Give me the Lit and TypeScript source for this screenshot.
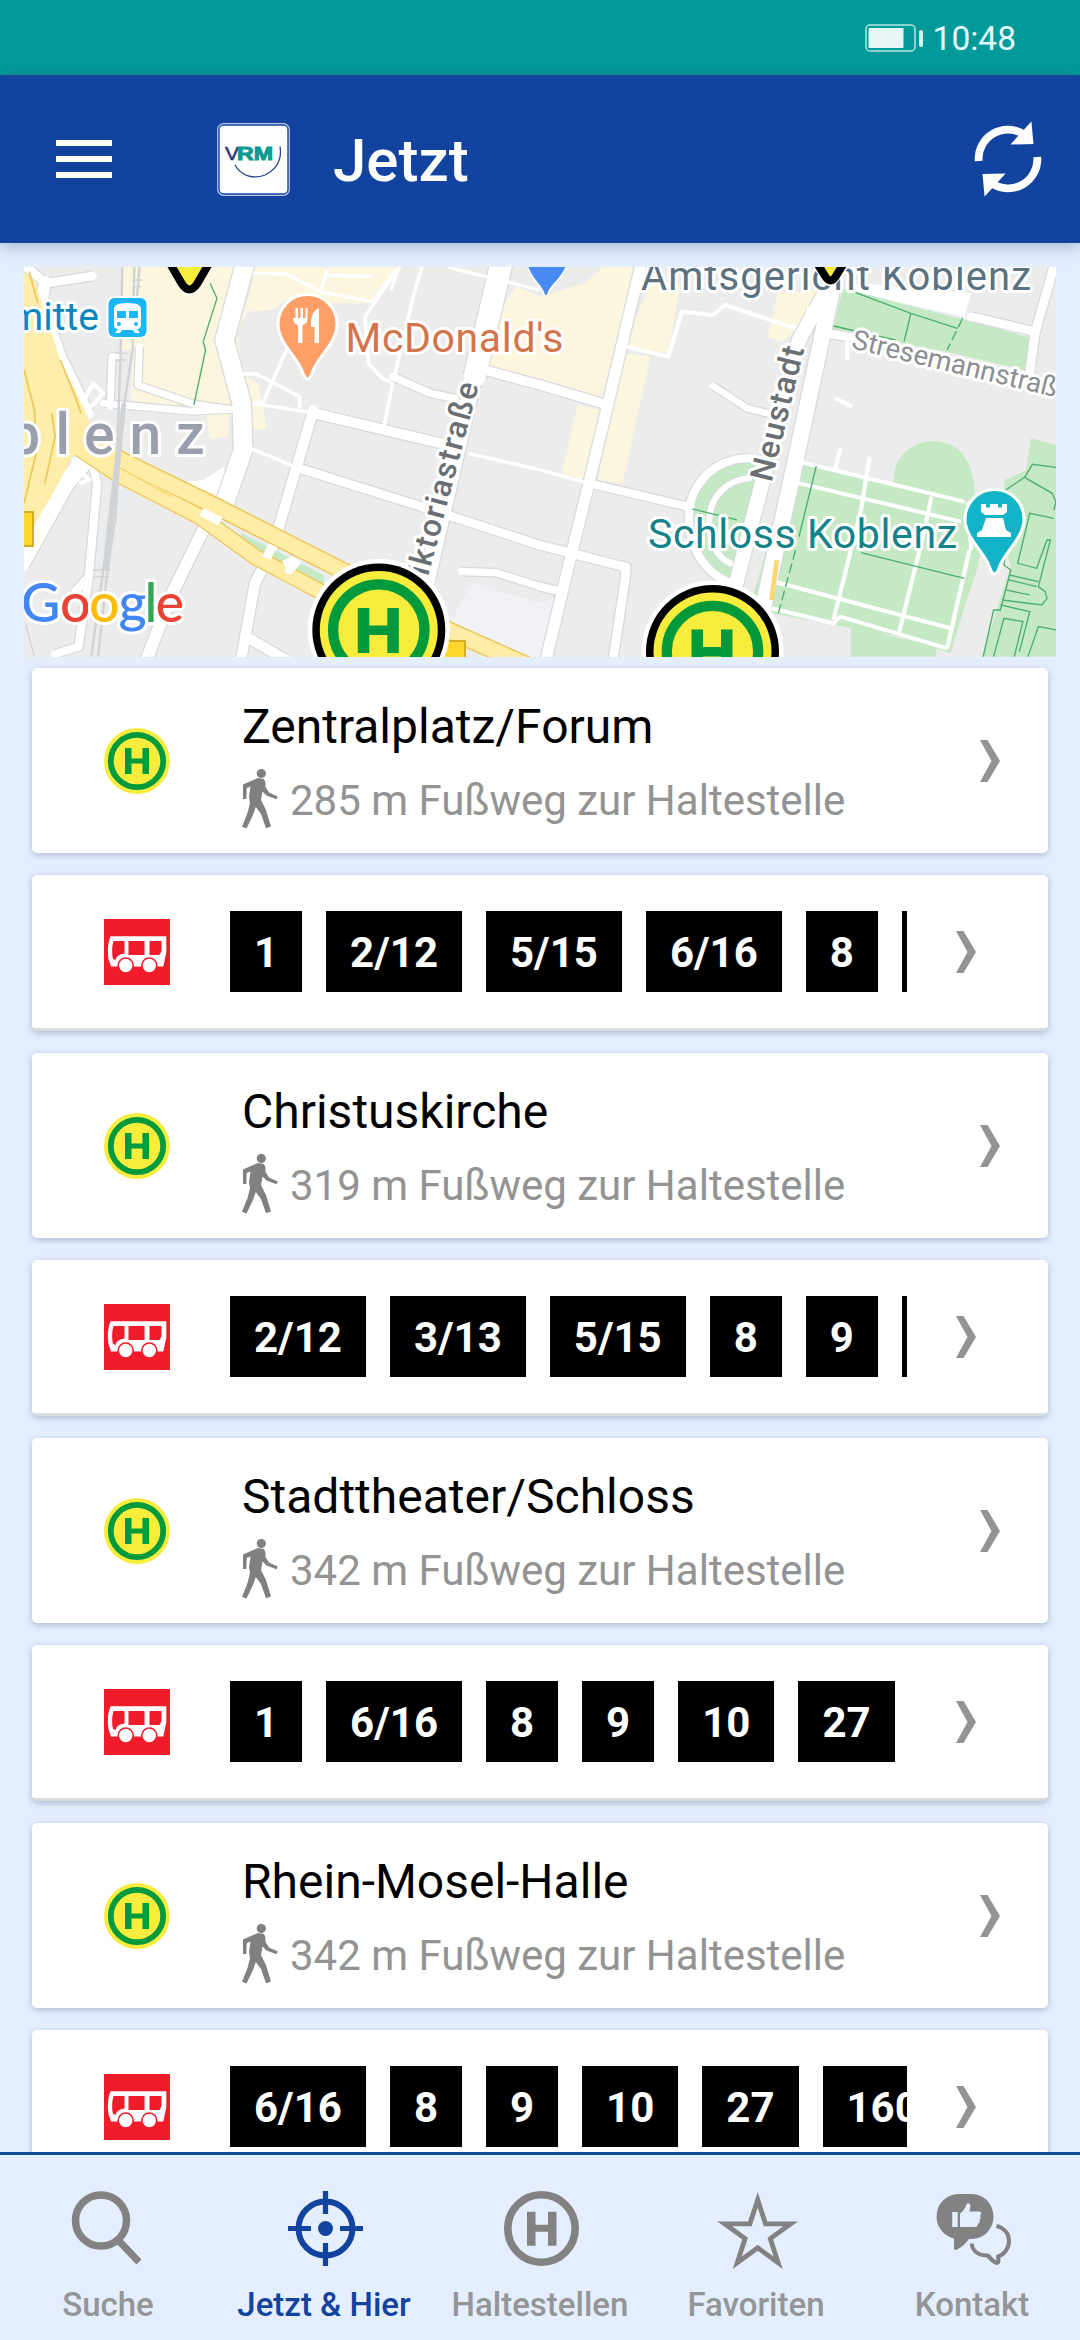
import { LitElement, html, svg, css } from 'lit';
import { customElement, property } from 'lit/decorators.js';
import { classMap } from 'lit/directives/class-map.js';

interface Stop {
  name: string;
  distance: number;
  lines: string[];
}

const STOPS: Stop[] = [
  { name: 'Zentralplatz/Forum', distance: 285, lines: ['1', '2/12', '5/15', '6/16', '8', '9'] },
  { name: 'Christuskirche', distance: 319, lines: ['2/12', '3/13', '5/15', '8', '9', '10'] },
  { name: 'Stadttheater/Schloss', distance: 342, lines: ['1', '6/16', '8', '9', '10', '27'] },
  { name: 'Rhein-Mosel-Halle', distance: 342, lines: ['6/16', '8', '9', '10', '27', '160'] },
];

const chevron = html`
  <svg class="chevron" viewBox="0 0 20 42" width="20" height="42">
    <path d="M0 0h7.500L20 21 7.500 42H0L11.500 21z" fill="#939393" />
  </svg>
`;

/** Header, title and sync action. */
@customElement('app-header')
export class AppHeader extends LitElement {
  static styles = css`
    :host { display: block; }
    .status {
      display: flex;
      align-items: center;
      justify-content: flex-end;
      gap: 10px;
      height: 75px;
      padding-right: 64px;
      box-sizing: border-box;
      background: #009a9a;
      color: #e4fbfa;
      font-size: 33.500px;
    }
    .clock { line-height: 77px; height: 75px; }
    .bar {
      display: flex;
      align-items: center;
      height: 168px;
      padding: 0 38px 0 56px;
      background: #12449f;
      box-shadow: 0 3px 16px rgba(60, 60, 110, 0.35);
    }
    .menu { display: flex; flex-direction: column; gap: 10px; width: 56px; }
    .menu i { height: 6px; background: #fff; }
    .logo { margin-left: 105px; }
    .title {
      flex: 1;
      margin-left: 43px;
      padding-top: 4px;
      color: #fff;
      font-size: 60px;
      font-weight: 500;
      line-height: 80px;
    }
  `;

  render() {
    return html`
      <div class="status">
        <svg viewBox="0 0 58 28" width="58" height="28">
          <rect x="1" y="1" width="49" height="26" rx="4" fill="none" stroke="#b5e6e3" stroke-width="1.500" />
          <rect x="3.500" y="4" width="35" height="20" rx="1" fill="#e6f6f5" />
          <rect x="54" y="6" width="4" height="17" rx="2" fill="#d8f3f1" />
        </svg>
        <span class="clock">10:48</span>
      </div>
      <div class="bar">
        <div class="menu"><i></i><i></i><i></i></div>
        <svg class="logo" viewBox="0 0 73 73" width="73" height="73">
          <rect x="0.700" y="0.700" width="71.600" height="71.600" rx="6" fill="#12449f" stroke="#b9c6e8" stroke-width="1.200" />
          <rect x="2.700" y="2.700" width="67.600" height="67.600" rx="4" fill="#fff" />
          <text x="8" y="37" font-size="18.500" textLength="14" lengthAdjust="spacingAndGlyphs" fill="#2d3579" stroke="#2d3579" stroke-width="0.500" font-family="Liberation Sans, sans-serif">V</text>
          <text x="20" y="37" font-size="18.500" font-weight="700" textLength="36" lengthAdjust="spacingAndGlyphs" fill="#0f9a93" stroke="#0f9a93" stroke-width="1" font-family="Liberation Sans, sans-serif">RM</text>
          <path d="M18 42C24 53 37 56.500 48 52C60 46 65 36 63 23.500" fill="none" stroke="#2d4480" stroke-width="1.300" />
        </svg>
        <span class="title">Jetzt</span>
        <svg viewBox="-36 -38 72 76" width="68" height="76" preserveAspectRatio="xMidYMid slice">
          ${[0, 180].map((a) => svg`
            <g transform="rotate(${a})">
              <path d="M-29.300 2A29.300 29.300 0 0 1 16 -24.600" fill="none" stroke="#fff" stroke-width="7.800" />
              <path d="M23.400 -37.500L25.500 -15L2.500 -14.500L11 -24z" fill="#fff" />
            </g>
          `)}
        </svg>
      </div>
    `;
  }
}

/** Static map excerpt around the current position. */
@customElement('stop-map')
export class StopMap extends LitElement {
  static styles = css`
    :host { display: block; }
    svg { display: block; width: 100%; height: 100%; }
    .casing { fill: none; stroke: #d6d8dc; stroke-linejoin: round; }
    .road { fill: none; stroke: #fff; stroke-linejoin: round; }
    .hwy-casing { fill: none; stroke: #ecc75a; stroke-linejoin: round; }
    .hwy { fill: none; stroke: #ffeda6; stroke-linejoin: round; }
    .rail { fill: none; stroke: #d0d3d6; }
    .path { fill: none; stroke: #4caf70; stroke-width: 4; }
    .shop { fill: #fdf6de; }
    .park { fill: #c5e9c5; }
    .label {
      font-family: Roboto, sans-serif;
      paint-order: stroke;
      stroke: #fff;
      stroke-width: 6px;
      stroke-linejoin: round;
    }
    .street { font-weight: 500; fill: #6b6f73; }
    .google { font-family: Lato, sans-serif; font-size: 54px; font-weight: 500; }
  `;

  // [width, path]
  private roads: [number, string][] = [
    [26, 'M75 50L135 100L268 78'],
    [34, 'M130 95L122 160L175 320L255 490'],
    [52, 'M240 640L190 700L60 940'],
    [24, 'M270 650L282 700L258 980L222 1020M258 980L228 1190L160 1212'],
    [20, 'M320 470L325 320L345 318M405 290L400 405L560 462L670 478M300 460L560 484L670 478'],
    [54, 'M712 40L652 270L702 460L706 600L652 760'],
    [34, 'M652 740L590 840L500 1030L425 1230'],
    [30, 'M910 480L850 690L790 900L740 1000L700 1230M715 1160L830 1230'],
    [30, 'M905 488L1300 585'],
    [26, 'M860 652L1240 775L1568 886L1818 952L1815 990L1780 1230'],
    [64, 'M1456 40L1378 380'],
    [48, 'M1378 370L1240 985'],
    [28, 'M1390 355L1568 405L1765 465'],
    [32, 'M1862 40L1768 450L1710 700L1655 930L1585 1230'],
    [24, 'M1710 700L2005 772M1568 1010L1630 1025'],
    [22, 'M1140 380L1250 430L1320 445M1340 965L1440 968L1568 1010'],
    [20, 'M2070 408L2170 475L2230 490'],
    [24, 'M2175 625C2060 625 2000 720 2000 800C2000 900 2050 970 2120 1000'],
    [18, 'M2175 685C2110 690 2065 740 2060 800C2055 870 2080 920 2120 940'],
    [46, 'M2420 100L2300 680L2210 1100'],
    [42, 'M2395 130L2320 270L2215 690L2135 1010'],
    [26, 'M3060 50L3005 250L2990 370M2820 200L3005 245M2400 250L2520 270'],
  ];

  private lanes: [number, string][] = [
    [10, 'M735 70L830 72L930 125L1080 155L1150 60M930 125L950 60M950 75L1080 80M1135 120L1160 50L1060 200L1070 340L1110 385L1140 400L1115 530M1225 50L1200 140L1145 380'],
    [10, 'M1300 52L1568 120M840 280L765 455L735 460M690 372L745 372L870 440L870 475M735 460L905 488M730 596L860 652M1360 610L1568 660L1710 700'],
    [12, 'M1818 290L1940 320L1980 185L2070 195L2105 165L2310 235M2350 170L2340 230M2460 270L2460 330M2425 445L2475 470'],
    [12, 'M2300 630L2800 755M2300 695L2790 815M2440 595L2425 660M2525 620L2500 780L2420 1110M2705 740L2680 860L2610 1150M2815 900L2750 1195M2230 990L2760 1135M2240 1075L2420 1120L2440 1100L2750 1195M2810 760L2820 900'],
    [12, 'M245 450L270 400L300 430L265 470M70 370L100 370M75 470L95 470M230 700L260 690L240 670'],
  ];

  private stopPin(x: number, y: number) {
    return svg`
      <g transform="translate(${x} ${y})">
        <circle r="71" fill="#fff" />
        <circle r="66.500" />
        <circle r="59" fill="#f8ec3d" />
        <circle r="45.700" fill="none" stroke="#009a3d" stroke-width="10.300" />
        <path d="M-21 -22h11.500v17.500h18v-17.500h11.500v45h-11.500v-18h-18v18h-11.500z" fill="#009a3d" />
      </g>
    `;
  }

  private poiPin(x: number, y: number, fill: string) {
    return svg`
      <path transform="translate(${x} ${y})" fill=${fill} stroke="#fff" stroke-width="3"
        d="M0 55C-3 55 -4 51 -5 48C-10 33 -29.500 19 -29.500 0A29.500 29.500 0 0 1 29.500 0C29.500 19 10 33 5 48C4 51 3 55 0 55z" />
    `;
  }

  render() {
    return html`
      <svg viewBox="24 267 1032 390" preserveAspectRatio="none">
        <rect x="24" y="267" width="1032" height="390" fill="#ececec" />
        <g transform="translate(0 250) scale(0.3444 0.3333)">
          <path class="shop" d="M355 51H700L630 280L668 430L662 560L610 568L600 500L380 450L385 300L350 300zM735 51H1160L1080 160H960L830 150L790 180L720 185L690 240L700 370L750 400L775 535L735 540L730 460L680 330L690 250L735 90z" />
          <path class="shop" d="M1500 110L1568 140L1700 100L1750 51H1850L1760 460L1568 400L1405 340L1425 220zM1890 90L1975 105L1940 310L1815 290zM1815 310L1888 320L1808 700L1735 690zM1678 465L1745 480L1700 690L1630 670zM2258 130L2400 120L2310 240L2270 275L2230 262z" />
          <path fill="#f1f2f5" d="M1370 1000L1568 1060L1625 1040L1590 1220H1420L1310 1110z" />
          <path fill="#fff" d="M2500 100L2820 130L2800 200L2440 120zM600 740L510 700L590 690L650 650L670 760L630 830L575 785z" />
          <path class="park" d="M2448 115L2768 200L2998 265L2990 365L2768 310L2418 240z" />
          <path class="park" d="M2595 700C2590 610 2660 573 2713 573C2780 573 2835 630 2830 760z" />
          <path class="park" d="M2300 635L2810 760L2855 850L2840 950L2810 1040L2760 1210L2610 1160L2240 1090L2180 1220H2130L2200 990zM2175 625C2060 630 2005 720 2005 800C2005 900 2060 980 2130 1000L2215 680z" />
          <path class="park" d="M2993 565L3066 585V1220H2850L2935 950L2905 850L2918 690L2980 660zM2470 1130L2718 1190V1220H2470z" />

          ${this.roads.map(([w, d]) => svg`<path class="casing" stroke-width=${w + 7} d=${d} />`)}
          ${this.lanes.map(([w, d]) => svg`<path class="road" stroke-width=${w} d=${d} />`)}
          ${this.roads.map(([w, d]) => svg`<path class="road" stroke-width=${w} stroke-linecap="round" d=${d} />`)}

          <path d="M70 70L100 90L175 330L250 490L290 590L210 620L170 700L65 890V330L70 330z" fill="#ffeeab" />
          <path d="M85 65L110 160M70 360L100 480L105 610L70 760M150 490L160 560L130 700M175 330L215 430L235 490" fill="none" stroke="#ecc75a" stroke-width="5" />
          <path d="M210 625C240 610 275 640 285 660L240 650L190 690z" fill="#fff" />
          <path d="M700 850L940 975V1010L860 970L700 880z" fill="#c5e9c5" />
          <path class="hwy-casing" stroke-width="54" d="M230 580L340 625L600 755L800 860L1000 965L1300 1140L1540 1250" />
          <path class="hwy-casing" stroke-width="50" d="M230 595L340 672L580 800L740 920L940 1030L1100 1090" />
          <path class="hwy" stroke-width="45" d="M200 550L340 625L600 755L800 860L1000 965L1300 1140L1540 1250" />
          <path class="hwy" stroke-width="42" d="M200 575L340 672L580 800L740 920L940 1030L1100 1090" />
          <path d="M350 655L500 740" stroke="#ecc75a" stroke-width="3" />
          <path class="road" stroke-width="26" d="M585 785L640 815M790 885L775 925M825 945L845 935L840 960L865 930" />
          <path d="M2256 930L2240 1050" stroke="#fbd774" stroke-width="14" />

          <path class="rail" stroke-width="7" d="M355 51L350 320L340 600L300 960L265 1220M390 51L385 300L355 500L335 800L310 980L285 1220M405 51L395 180" />
          <path class="rail" stroke-width="14" d="M360 460L335 700L305 960" />
          <path class="rail" stroke-width="4" d="M335 310H370M335 330H365M385 90H412M385 110H410M270 960H320M275 980H318M75 1125L100 1220" />
          <path class="path" stroke-width="5" d="M610 100L630 145L590 275L597 300L563 465" />
          <path class="path" d="M2485 128L2645 190L2780 235M2645 190L2625 275M2420 228L2600 270M2370 648L2320 860M2500 908L2800 985M2010 777L2140 810" />
          <path class="path" stroke-dasharray="30 12" d="M2795 205L2750 300M2310 900L2260 1090" />
          <path class="path" d="M3066 652L2998 643L2975 682L2920 720L2930 850L2915 945L2935 960L2905 1080L2885 1080L2855 1220M2975 682L3055 730L3066 755L3060 780M3060 805L2990 790L2955 940L3010 955L3040 870L3050 870L3015 1010L3035 1025L3040 1045L3025 1065L2910 1050M2930 975L3015 995M2930 990L3010 1010M2920 1020L2990 1035M2905 1065L2990 1085L2960 1205M2885 1220L2915 1105L2970 1115L2945 1220M2985 1220L3015 1130L3066 1140" />
        </g>

        <rect x="14" y="512" width="19" height="34" fill="#fbd72b" stroke="#d5ab27" stroke-width="2" />
        <rect x="440" y="641" width="25" height="30" fill="#fbd72b" stroke="#d5ab27" stroke-width="2" />

        <text class="label" x="99" y="330" text-anchor="end" font-size="39" fill="#0d86bd">mitte</text>
        <rect x="106.500" y="296" width="42" height="43" rx="8" fill="#fff" />
        <rect x="108.500" y="298" width="38" height="39" rx="6" fill="#1cb5f7" />
        <path d="M114 309q0 -6 13.500 -6t13.500 6v16q0 4 -4 4l3 4h-5l-2 -3h-11l-2 3h-5l3 -4q-4 0 -4 -4z" fill="#fff" />
        <path d="M117 311h9v7h-9zM129 311h9v7h-9z" fill="#1cb5f7" />
        <circle cx="119" cy="324" r="2" fill="#1cb5f7" />
        <circle cx="136" cy="324" r="2" fill="#1cb5f7" />

        <text class="label" x="8 55.500 84 129.500 176" y="454" font-size="57" font-weight="500" fill="#9a9fae" stroke-width="9">blenz</text>
        <text class="label google" y="621.500"><tspan x="21" fill="#4285f4">G</tspan><tspan x="60" fill="#ea4335">o</tspan><tspan x="89" fill="#fbbc05">o</tspan><tspan x="118.500" fill="#4285f4">g</tspan><tspan x="144.500" fill="#34a853">l</tspan><tspan x="155.500" fill="#ea4335">e</tspan></text>

        <text class="label street" transform="translate(422.500 598) rotate(-75.200)" font-size="31.500" textLength="220">Viktoriastraße</text>
        <text class="label street" transform="translate(771.500 483) rotate(-76.300)" font-size="32" textLength="138">Neustadt</text>
        <text class="label" transform="translate(850.500 348) rotate(13.500)" font-size="27.500" fill="#8b8e91">Stresemannstraße</text>

        <text class="label" x="641" y="289.500" font-size="40" textLength="390" fill="#5c7280">Amtsgericht Koblenz</text>
        <text class="label" x="345.500" y="352" font-size="41" textLength="218" fill="#d4744b">McDonald's</text>
        <text class="label" x="648" y="548" font-size="41" textLength="309" fill="#13828a">Schloss Koblenz</text>

        ${this.poiPin(307.5, 324, '#ff9e67')}
        <path d="M293 308v10q0 6 5 7v18h4.500v-18q5 -1 5 -7v-10h-2v10h-2.500v-10h-2.500v10h-2.500v-10h-2.500v10h-2.500zM319 308q-9 4 -8 19h3.500v16h4.500z" fill="#fff" />
        ${this.poiPin(994.5, 519, '#13b4c7')}
        <path d="M981 504h5v3.500h4v-3.500h8v3.500h4v-3.500h5v8l-4 3h-18l-4 -3zM986 518h17l3 12 5 3v4h-34v-4l5 -3z" fill="#fff" />
        <path d="M527 265C531 280 542 285 544 294q2 4 4 0C550 285 562 280 567 265z" fill="#4a8af4" stroke="#fff" stroke-width="1.500" />

        <path d="M162 255L179 285Q189.400 306 200 285L217 255z" fill="#fff" />
        <path d="M168 260L182 284Q189.400 295 197 284L211 260z" fill="#f8ec3d" stroke="#000" stroke-width="8" />
        <path d="M803 255L820 277Q830.600 296 841 277L858 255z" fill="#fff" />
        <path d="M812 255L825 276Q830.600 285 836 276L849 255z" fill="#f8ec3d" stroke="#000" stroke-width="8" />
        ${this.stopPin(378.8, 630)}
        ${this.stopPin(712.5, 651.5)}
      </svg>
    `;
  }
}

/** One stop: name card plus the card listing its lines. */
@customElement('stop-entry')
export class StopEntry extends LitElement {
  @property({ attribute: false }) stop!: Stop;

  static styles = css`
    :host { display: flex; flex-direction: column; gap: 22px; }
    .card {
      display: flex;
      align-items: center;
      box-sizing: border-box;
      background: #fff;
      border-radius: 5px;
      box-shadow: 0 2px 6px rgba(50, 80, 120, 0.32);
    }
    .name-card { height: 185px; padding: 0 48px 0 72px; }
    .line-card {
      height: 156px;
      padding: 0 72px;
      border-bottom: 3px solid #d8dee0;
    }
    svg { display: block; flex: none; }
    .info {
      flex: 1;
      align-self: flex-start;
      margin-left: 72px;
      padding-top: 23px;
    }
    .name { color: #000; font-size: 48px; line-height: 72px; white-space: nowrap; }
    .walk {
      display: flex;
      gap: 12px;
      margin-top: 6px;
      color: #939393;
      font-size: 42px;
      line-height: 64px;
      white-space: nowrap;
    }
    .lines {
      display: flex;
      gap: 24px;
      flex: none;
      width: 677px;
      margin: 0 49px 0 60px;
      overflow: hidden;
    }
    .line {
      flex: none;
      height: 81px;
      padding: 0 24px;
      background: #000;
      color: #fff;
      font-size: 42px;
      font-weight: 700;
      line-height: 84px;
    }
  `;

  render() {
    const { name, distance, lines } = this.stop;
    return html`
      <div class="card name-card">
        <svg viewBox="-33 -33 66 66" width="66" height="66">
          <circle r="33" fill="#f8ec3d" />
          <circle r="26.200" fill="none" stroke="#009a3d" stroke-width="5.800" />
          <path d="M-12 -13h6.500v10.500h11v-10.500h6.500v26h-6.500v-10.500h-11v10.500h-6.500z" fill="#009a3d" />
        </svg>
        <div class="info">
          <div class="name">${name}</div>
          <div class="walk">
            <svg viewBox="0 0 36 60" width="36" height="60">
              <circle cx="19.300" cy="4.500" r="4.600" fill="#808080" />
              <path fill="#808080" d="M16 9L22 10Q24 13 23.500 18L27 23.500L35.800 27.500L34.500 30.200L24.500 26.500L20.500 22.500L19 31L24 41L29 57.500L24 59.200L19 45L13.800 38L11 46L4.500 59.500L0 57.800L5.500 44L8 34L7 28L8.500 17.500L4.800 19L4.300 30H1V15.500z" />
            </svg>
            <span>${distance} m Fußweg zur Haltestelle</span>
          </div>
        </div>
        ${chevron}
      </div>
      <div class="card line-card">
        <svg viewBox="0 0 66 66" width="66" height="66">
          <rect width="66" height="66" fill="#f01c2a" />
          <path d="M6.500 17.300H62.300V33.500L59.300 47.500H7L4.500 40Q2.500 27 6.500 17.300z" fill="#fff" />
          <path d="M9.500 22H20.500V34.500Q12.500 35.500 11.500 41L9 40Q7 31 9.500 22zM24.500 22H40.500V36H24.500zM45.500 22H57.500V32L55.500 36H45.500z" fill="#f01c2a" />
          <circle cx="21.700" cy="46.500" r="7.500" fill="#fff" stroke="#f01c2a" stroke-width="1.600" />
          <circle cx="45.300" cy="46.500" r="7.500" fill="#fff" stroke="#f01c2a" stroke-width="1.600" />
        </svg>
        <div class="lines">
          ${lines.map((line) => html`<span class="line">${line}</span>`)}
        </div>
        ${chevron}
      </div>
    `;
  }
}

const TABS = [
  {
    label: 'Suche',
    icon: svg`
      <circle cx="33" cy="30.500" r="25.500" stroke-width="7.500" />
      <path d="M50.500 50.500L71 72" stroke-width="7" />
    `,
  },
  {
    label: 'Jetzt & Hier',
    icon: svg`
      <circle cx="41.500" cy="38.500" r="27" stroke-width="6" />
      <circle cx="41.500" cy="38.500" r="7.500" fill="currentColor" stroke="none" />
      <path d="M41.500 1V24M41.500 53V76M4 38.500H27M56 38.500H79" stroke-width="5.200" />
    `,
  },
  {
    label: 'Haltestellen',
    icon: svg`
      <circle cx="41.500" cy="38.500" r="33.700" stroke-width="7.600" />
      <path d="M27 21.700h8.500v13h12.500v-13h8.500v34h-8.500v-14h-12.500v14h-8.500z" fill="currentColor" stroke="none" />
    `,
  },
  {
    label: 'Favoriten',
    icon: svg`
      <path stroke-width="4.800" stroke-miterlimit="10" d="M41.700 9.800L49.500 33.800H74.700L54.300 48.600L62.100 72.600L41.700 57.800L21.300 72.600L29.100 48.600L8.700 33.800H33.900z" />
    `,
  },
  {
    label: 'Kontakt',
    icon: svg`
      <path fill="currentColor" stroke="none" d="M26 4H40A21.500 22.500 0 0 1 40 49H37Q31 57 24 60Q21.500 60 22 57V48.500A22 22.500 0 0 1 26 4z" />
      <path fill="#e4eefd" stroke="none" d="M20.200 22h5.500v15h-5.500zM28 23.500Q33 20 34.500 14Q37.500 12 38.500 15.500L37.500 21.500H48Q50.500 23.500 48 25.500Q49.500 28 47.500 30Q48.500 32.500 46 33.500Q46 37 43 37H28z" />
      <path stroke-width="4" stroke-linejoin="round" d="M64.500 36C72.500 38 77 44 77 51C77 58 72.500 64.500 66 66.500Q67.500 73 64.500 73Q60 71 56 65.500C47 66 40 61 39.800 53.500" />
    `,
  },
];

@customElement('tab-bar')
export class TabBar extends LitElement {
  @property() active = '';

  static styles = css`
    :host {
      display: grid;
      grid-template-columns: repeat(5, 1fr);
      box-sizing: border-box;
      height: 188px;
      border-top: 3px solid #124a93;
      background: #e4eefd;
    }
    .tab {
      display: flex;
      flex-direction: column;
      align-items: center;
      padding-top: 35px;
      color: #939597;
      font-size: 33px;
      font-weight: 500;
      line-height: 40px;
      white-space: nowrap;
    }
    .icon { display: block; margin-bottom: 15px; color: #828282; overflow: visible; }
    .tab.active, .tab.active .icon { color: #12449f; }
  `;

  render() {
    return TABS.map((tab) => html`
      <div class="tab ${classMap({ active: tab.label === this.active })}">
        <svg class="icon" viewBox="0 0 80 80" width="80" height="80" fill="none" stroke="currentColor">${tab.icon}</svg>
        <span>${tab.label}</span>
      </div>
    `);
  }
}

@customElement('app-root')
export class AppRoot extends LitElement {
  static styles = css`
    :host {
      display: flex;
      flex-direction: column;
      width: 1080px;
      height: 2340px;
      overflow: hidden;
      background: #e4eefd;
      font-family: Roboto, sans-serif;
    }
    app-header { flex: none; z-index: 1; }
    .content { flex: 1; min-height: 0; overflow: hidden; }
    .map { height: 390px; margin: 24px 24px 11px; }
    .list {
      display: flex;
      flex-direction: column;
      gap: 22px;
      padding: 0 32px;
    }
    tab-bar { flex: none; }
  `;

  render() {
    return html`
      <app-header></app-header>
      <div class="content">
        <stop-map class="map"></stop-map>
        <div class="list">
          ${STOPS.map((stop) => html`<stop-entry .stop=${stop}></stop-entry>`)}
        </div>
      </div>
      <tab-bar active="Jetzt &amp; Hier"></tab-bar>
    `;
  }
}
